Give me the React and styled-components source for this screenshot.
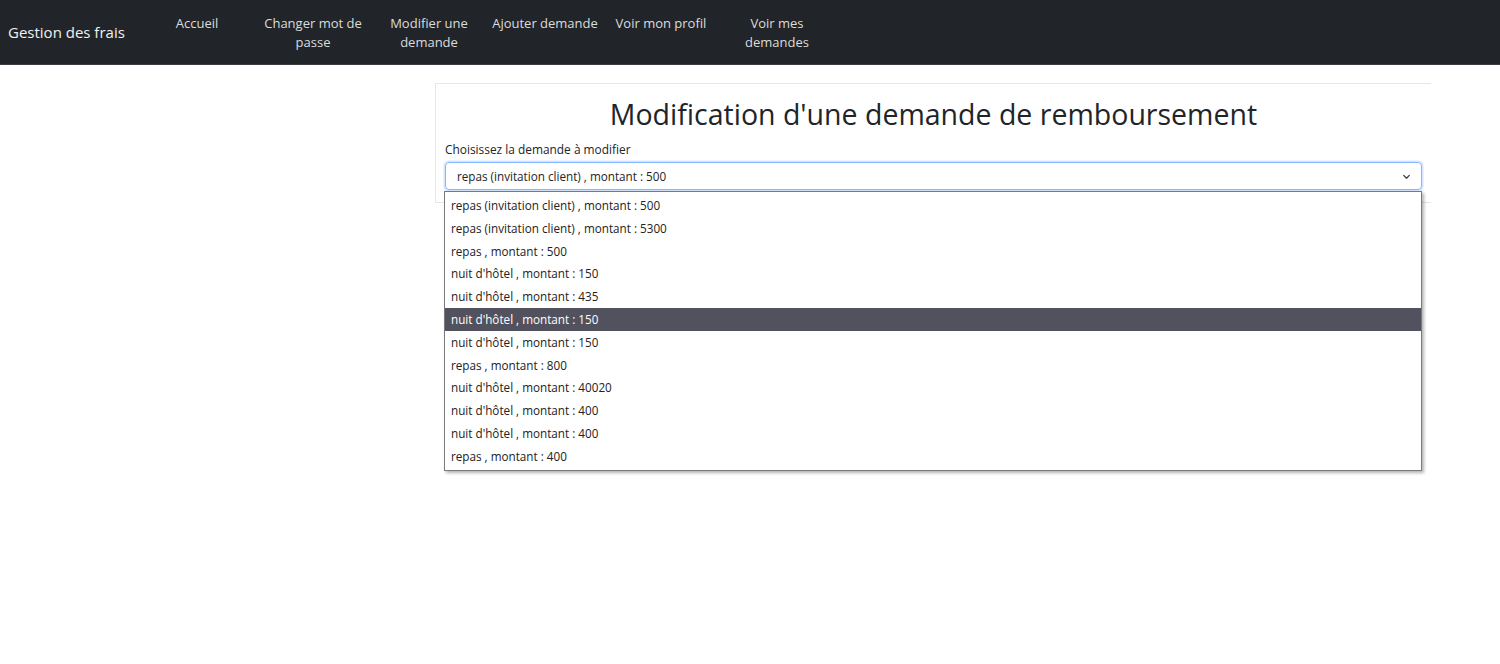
import React from 'react'
import styled, { createGlobalStyle } from 'styled-components'

const GlobalStyle = createGlobalStyle`
  body {
    margin: 0;
    background: #fff;
    font-family: "Open Sans", "Noto Sans", sans-serif;
    color: #212529;
  }
`

const Page = styled.div`
  min-height: 100vh;
`

const Navbar = styled.nav`
  height: 65px;
  background-color: #212529;
  display: flex;
  align-items: flex-start;
  border-bottom: 1px solid #3a3d41;
  box-sizing: border-box;
`

const Brand = styled.div`
  color: #f1f1f1;
  font-size: 15px;
  line-height: 20px;
  padding: 22px 0 0 8px;
  width: 131px;
  white-space: nowrap;
`

const NavList = styled.div`
  display: flex;
  padding-top: 14px;
`

const NavItem = styled.div`
  width: 116px;
  color: #dcdcdc;
  font-size: 13px;
  line-height: 19px;
  text-align: center;
  padding: 0 4px;
  box-sizing: border-box;
  cursor: pointer;
  &:hover {
    color: white;
    transition: 0.3s;
  }
`

const Main = styled.main`
  padding: 18px 69px 0 435px;
`

const Card = styled.section`
  position: relative;
  border: 1px solid #e3e6ea;
  border-right: none;
  padding: 8px 9px 12px 9px;
`

const Title = styled.h1`
  margin: 0 0 6px;
  text-align: center;
  font-weight: 400;
  font-size: 28.5px;
  line-height: 44px;
  color: #212529;
`

const Label = styled.label`
  display: block;
  font-size: 11.9px;
  line-height: 14px;
  margin-bottom: 6px;
  color: #212529;
`

const SelectWrap = styled.div`
  position: relative;
`

const Select = styled.div`
  height: 28px;
  box-sizing: border-box;
  border: 1px solid #86b7fe;
  border-radius: 4px;
  box-shadow: 0 0 0 1.5px rgba(13, 110, 253, 0.18);
  display: flex;
  align-items: center;
  justify-content: space-between;
  padding: 0 10px 0 11px;
  font-size: 11.7px;
  color: #212529;
`

const Chevron = styled.svg`
  width: 9px;
  height: 9px;
`

const Options = styled.ul`
  position: absolute;
  top: 29px;
  left: -1px;
  right: 0;
  margin: 0;
  padding: 2px 0 2px;
  list-style: none;
  background: #fff;
  border: 1px solid #7a7a7a;
  box-shadow: 2px 2px 3px rgba(0, 0, 0, 0.3);
  z-index: 5;
`

const Option = styled.li`
  height: 22.8px;
  line-height: 22.8px;
  padding-left: 6px;
  font-size: 11.7px;
  color: ${p => (p.$active ? '#fff' : '#222')};
  background: ${p => (p.$active ? '#52525e' : 'transparent')};
`

const links = [
  'Accueil',
  'Changer mot de passe',
  'Modifier une demande',
  'Ajouter demande',
  'Voir mon profil',
  'Voir mes demandes',
]

const demandes = [
  'repas (invitation client) , montant : 500',
  'repas (invitation client) , montant : 5300',
  'repas , montant : 500',
  "nuit d'hôtel , montant :  150",
  "nuit d'hôtel , montant : 435",
  "nuit d'hôtel , montant :  150",
  "nuit d'hôtel , montant :  150",
  'repas , montant : 800',
  "nuit d'hôtel , montant : 40020",
  "nuit d'hôtel , montant : 400",
  "nuit d'hôtel , montant : 400",
  'repas , montant : 400',
]

export default function App() {
  return (
    <Page>
      <GlobalStyle />
      <Navbar>
        <Brand>Gestion des frais</Brand>
        <NavList>
          {links.map(l => (
            <NavItem key={l}>{l}</NavItem>
          ))}
        </NavList>
      </Navbar>
      <Main>
        <Card>
          <Title>Modification d'une demande de remboursement</Title>
          <Label>Choisissez la demande à modifier</Label>
          <SelectWrap>
            <Select>
              <span>{demandes[0]}</span>
              <Chevron viewBox="0 0 16 16">
                <path d="M3 6l5 5 5-5" fill="none" stroke="#343a40" strokeWidth="2.2" strokeLinecap="round" strokeLinejoin="round" />
              </Chevron>
            </Select>
            <Options>
              {demandes.map((d, i) => (
                <Option key={i} $active={i === 5}>{d}</Option>
              ))}
            </Options>
          </SelectWrap>
        </Card>
      </Main>
    </Page>
  )
}
